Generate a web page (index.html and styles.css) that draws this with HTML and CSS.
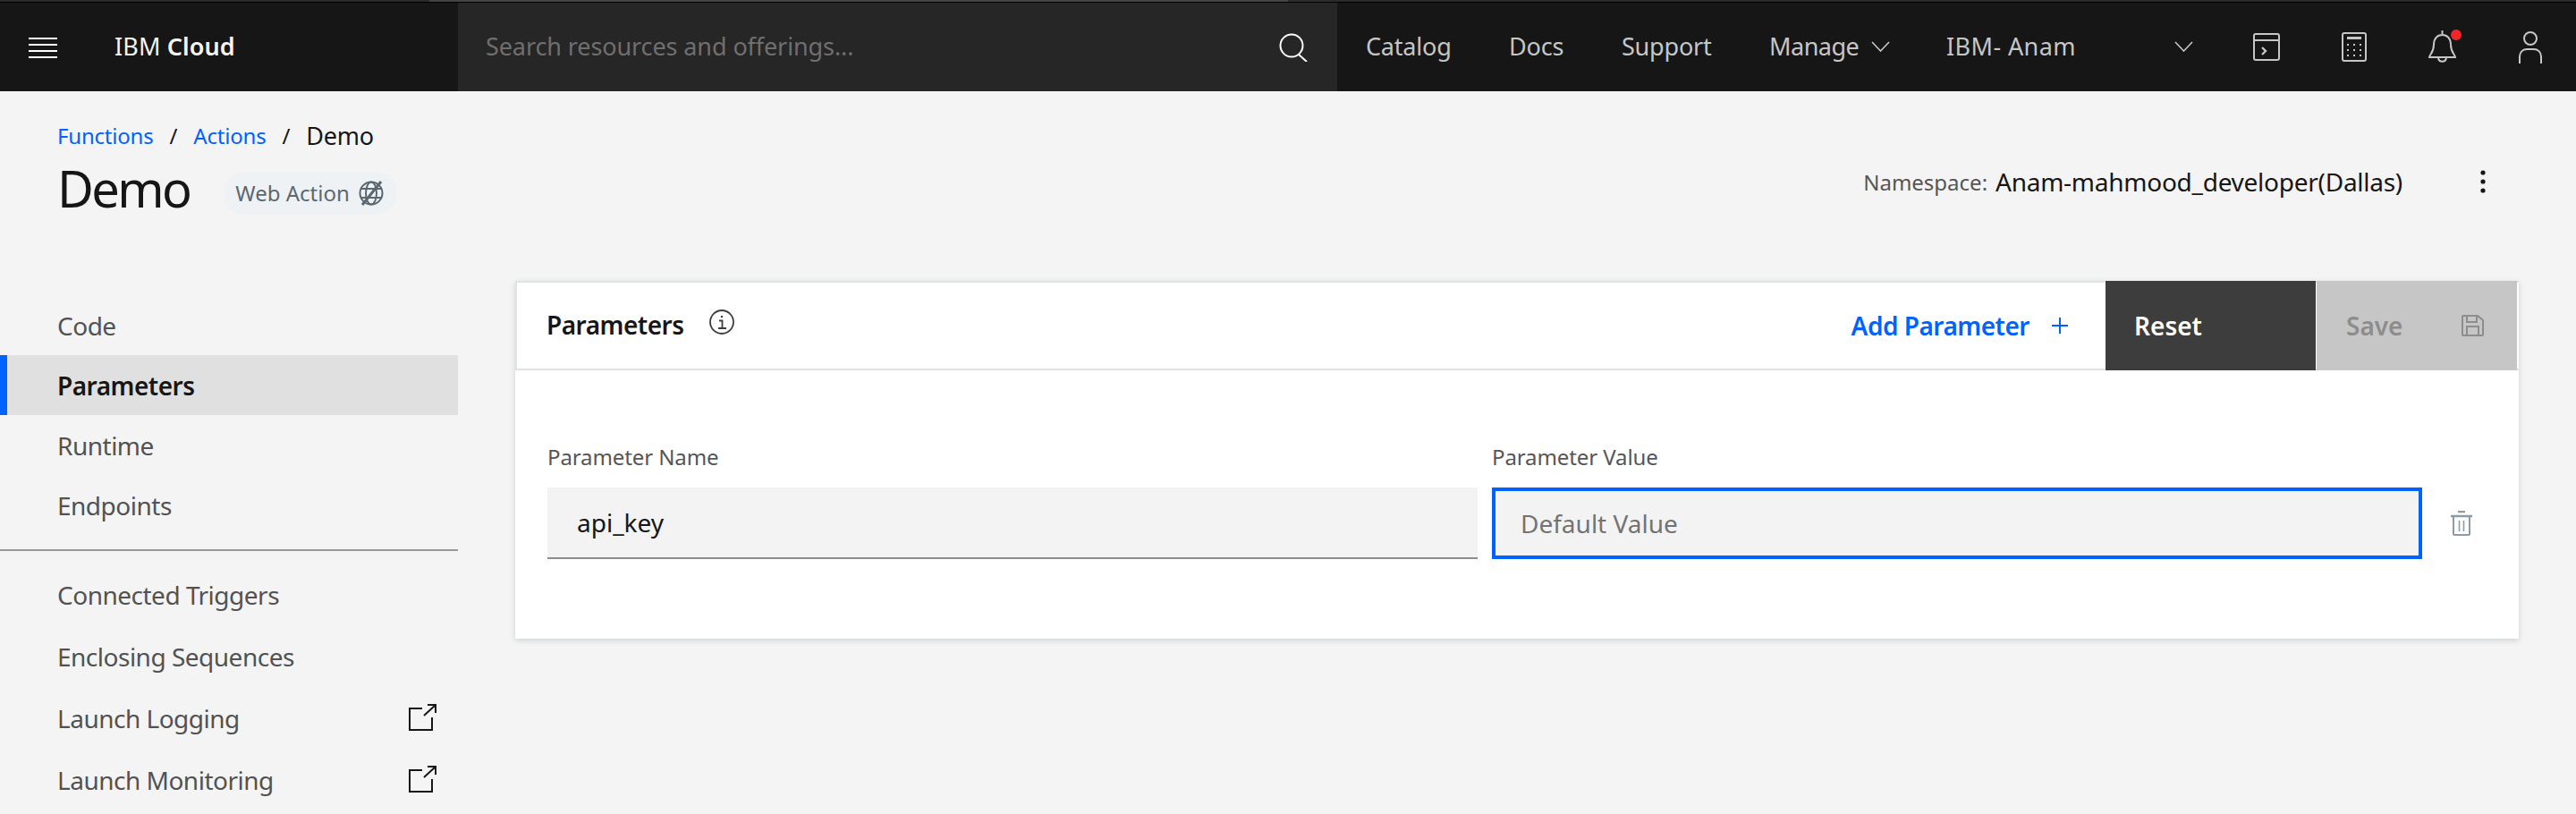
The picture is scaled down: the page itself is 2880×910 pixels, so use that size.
FILE: index.html
```html
<!DOCTYPE html>
<html lang="en">
<head>
    <meta charset="UTF-8">
    <title>Demo - Functions</title>
    <link rel="stylesheet" href="styles.css">
</head>
<body>
    <div class="strip"><span class="strip-a"></span><span class="strip-b"></span><span class="strip-c"></span></div>
    <header class="topbar">
        <div class="brand">
            <svg class="menu-icon" width="32" height="24" viewBox="0 0 32 24" fill="#fff"><rect y="1" width="32" height="2"/><rect y="8" width="32" height="2"/><rect y="15" width="32" height="2"/><rect y="22" width="32" height="2"/></svg>
            <span class="brand-name">IBM <b>Cloud</b></span>
        </div>
        <div class="search">
            <span class="search-text">Search resources and offerings...</span>
            <svg width="34" height="32" viewBox="0 0 34 32" fill="none" stroke="#fff" stroke-width="2"><circle cx="15" cy="14" r="12.5"/><path d="M23 24l9 8"/></svg>
        </div>
        <nav class="nav">
            <span>Catalog</span>
            <span>Docs</span>
            <span>Support</span>
            <span class="nav-manage">Manage
                <svg width="21" height="12" viewBox="0 0 21 12" fill="none" stroke="#c6c6c6" stroke-width="1.6"><path d="M1 1l9.500 10L20 1"/></svg>
            </span>
            <span class="nav-account">IBM- Anam
                <svg width="21" height="12" viewBox="0 0 21 12" fill="none" stroke="#c6c6c6" stroke-width="1.6"><path d="M1 1l9.500 10L20 1"/></svg>
            </span>
            <svg width="30" height="31" viewBox="0 0 30 31" fill="none" stroke="#c6c6c6" stroke-width="2"><rect x="1" y="1" width="28" height="29" rx="2"/><path d="M1 8h28"/><path d="M10 16l4 4-4 4" stroke-width="2.400"/></svg>
            <svg width="28" height="33" viewBox="0 0 28 33" fill="none" stroke="#c6c6c6" stroke-width="2"><rect x="1" y="1" width="26" height="31" rx="2"/><path d="M6 6.500h16" stroke-width="3"/><path d="M6 14h2M13 14h2M20 14h2M6 20h2M13 20h2M20 20h2M6 26h2M13 26h2M20 26h2"/></svg>
            <span class="bell">
                <svg width="34" height="37" viewBox="0 0 34 37" fill="none" stroke="#c6c6c6" stroke-width="2"><path d="M16.500 0v5M2 30h29c0-3-5-5-5-14 0-7-4-11-9.500-11S7 9 7 16c0 9-5 11-5 14z"/><path d="M12 31c1 5 8 5 9 0"/></svg>
                <span class="bell-dot"></span>
            </span>
            <svg width="26" height="36" viewBox="0 0 26 36" fill="none" stroke="#c6c6c6" stroke-width="2"><circle cx="13" cy="8" r="7"/><path d="M1 36V28c0-5 4-8 8-8h8c4 0 8 3 8 8v8"/></svg>
        </nav>
    </header>

    <section class="page-head">
        <div>
            <div class="breadcrumb"><a>Functions</a><i>/</i><a>Actions</a><i>/</i><span>Demo</span></div>
            <div class="title-row">
                <h1>Demo</h1>
                <span class="tag">Web Action
                    <svg width="28" height="28" viewBox="0 0 28 28" fill="none" stroke="#5a6872" stroke-width="2"><circle cx="14" cy="14" r="12.500"/><ellipse cx="14" cy="14" rx="6" ry="12.500"/><path d="M2 9h24M2 19h24"/><path d="M25 1L4 27" stroke-width="3"/></svg>
                </span>
            </div>
        </div>
        <div class="namespace">
            <span class="ns-label">Namespace:</span>
            <span class="ns-value">Anam-mahmood_developer(Dallas)</span>
            <svg class="kebab" width="6" height="26" viewBox="0 0 6 26" fill="#161616"><circle cx="3" cy="3" r="2.600"/><circle cx="3" cy="13" r="2.600"/><circle cx="3" cy="23" r="2.600"/></svg>
        </div>
    </section>

    <main class="layout">
        <aside class="sidebar">
            <ul class="side-group">
                <li>Code</li>
                <li class="active">Parameters</li>
                <li>Runtime</li>
                <li>Endpoints</li>
            </ul>
            <ul class="side-group side-lower">
                <li>Connected Triggers</li>
                <li>Enclosing Sequences</li>
                <li>Launch Logging
                    <svg width="31" height="30" viewBox="0 0 31 30" fill="none" stroke="#161616" stroke-width="2"><path d="M15 5H1v24h25V15"/><path d="M17 13L30 1M21 1h9v9"/></svg>
                </li>
                <li>Launch Monitoring
                    <svg width="31" height="30" viewBox="0 0 31 30" fill="none" stroke="#161616" stroke-width="2"><path d="M15 5H1v24h25V15"/><path d="M17 13L30 1M21 1h9v9"/></svg>
                </li>
            </ul>
        </aside>

        <section class="card">
            <div class="card-head">
                <h2>Parameters</h2>
                <svg class="info" width="28" height="28" viewBox="0 0 28 28" fill="none" stroke="#3d3d3d" stroke-width="1.800"><circle cx="14" cy="14" r="13"/><path d="M11 12.500h3.500V21M10 21h9"/><path d="M14 7v2" stroke-width="2.200"/></svg>
                <button class="add-btn">Add Parameter
                    <svg width="18" height="18" viewBox="0 0 18 18" fill="none" stroke="#0062ff" stroke-width="2"><path d="M9 0v18M0 9h18"/></svg>
                </button>
                <button class="reset-btn">Reset</button>
                <button class="save-btn">Save
                    <svg width="25" height="24" viewBox="0 0 25 24" fill="none" stroke="#8d8d8d" stroke-width="2"><path d="M1 2a1 1 0 0 1 1-1h16l6 5v16a1 1 0 0 1-1 1H2a1 1 0 0 1-1-1z"/><path d="M6 1v7h11V1M6 23V13h13v10"/></svg>
                </button>
            </div>
            <div class="card-body">
                <div class="field field-name">
                    <label>Parameter Name</label>
                    <input class="input" type="text" value="api_key">
                </div>
                <div class="field field-value">
                    <label>Parameter Value</label>
                    <input class="input input-focus" type="text" placeholder="Default Value">
                </div>
                <svg class="trash" width="24" height="28" viewBox="0 0 24 28" fill="none" stroke="#8c9ba5" stroke-width="2"><path d="M8 1h8" stroke-width="2.500"/><path d="M0 6h24" stroke-width="2.500"/><path d="M3 6v20a1 1 0 0 0 1 1h16a1 1 0 0 0 1-1V6"/><path d="M9.500 11v12M14.500 11v12" stroke-width="1.600"/></svg>
            </div>
        </section>
    </main>
</body>
</html>
```

FILE: styles.css
```css
* {
    box-sizing: border-box;
}
html, body {
    height: 910px;
    overflow: hidden;
}
body {
    margin: 0;
    background-color: #f4f4f4;
    color: #161616;
    font-family: "Noto Sans", Arial, sans-serif;
    font-size: 28px;
}
ul {
    list-style: none;
    margin: 0;
    padding: 0;
}
h1, h2 {
    margin: 0;
    font-weight: 400;
}

/* top bar */
.strip {
    display: flex;
    height: 3px;
    background-color: #000;
}
.strip span {
    height: 2px;
}
.strip-a {
    width: 480px;
    background-color: #2b2b2b;
}
.strip-b {
    width: 960px;
    background-color: #444;
}
.strip-c {
    flex: 1;
    background-color: #2b2b2b;
}
.topbar {
    display: flex;
    height: 99px;
    background-color: #161616;
    color: #c6c6c6;
}
.brand {
    display: flex;
    align-items: center;
    width: 512px;
    padding-left: 32px;
}
.menu-icon {
    margin-right: 64px;
}
.brand-name {
    color: #f4f4f4;
    font-size: 27px;
    letter-spacing: 0.1px;
    margin-bottom: 2px;
}
.brand-name b {
    font-weight: 600;
}
.search {
    display: flex;
    align-items: center;
    justify-content: space-between;
    width: 983px;
    padding: 0 32px 0 31px;
    background-color: #262626;
    color: #6f6f6f;
}
.search-text {
    font-size: 27px;
    letter-spacing: -0.1px;
    margin-bottom: 2px;
}
.nav {
    flex: 1;
    display: grid;
    grid-template-columns: 160px 126px 165px 198px 343px 99px 96px 102px 1fr;
    align-items: center;
    padding-left: 32px;
    font-size: 27px;
    letter-spacing: -0.2px;
}
.nav > span {
    padding-bottom: 2px;
}
.nav-manage, .nav-account {
    display: flex;
    align-items: center;
}
.nav-manage {
    letter-spacing: -0.5px;
}
.nav-manage svg {
    margin-left: 14px;
}
.nav-account {
    justify-content: space-between;
    padding-right: 67px;
    letter-spacing: 0.4px;
}
.bell {
    position: relative;
    display: block;
    height: 37px;
}
.bell-dot {
    position: absolute;
    top: -1px;
    left: 26px;
    width: 12px;
    height: 12px;
    border-radius: 50%;
    background-color: #f0262a;
}

/* page heading */
.page-head {
    display: flex;
    justify-content: space-between;
    height: 212px;
    padding: 34px 101px 0 64px;
}
.breadcrumb {
    display: flex;
    align-items: center;
    height: 30px;
    font-size: 24px;
    letter-spacing: -0.2px;
}
.breadcrumb a {
    color: #0062ff;
}
.breadcrumb i {
    margin: 0 18px;
    font-style: normal;
}
.breadcrumb span {
    font-size: 27px;
}
.title-row {
    display: flex;
    align-items: center;
    margin-top: 9px;
}
h1 {
    font-size: 56px;
    line-height: 70px;
    letter-spacing: -2.6px;
}
.tag {
    display: flex;
    align-items: center;
    gap: 10px;
    height: 48px;
    margin-left: 37px;
    margin-top: 11px;
    padding: 0 15px 0 14px;
    border-radius: 24px;
    background-color: #eff2f5;
    color: #5a6872;
    font-size: 24px;
}
.namespace {
    display: flex;
    align-items: center;
    height: 40px;
    margin-top: 47px;
}
.ns-label {
    color: #565656;
    font-size: 24px;
    margin-right: 9px;
}
.ns-value {
    font-size: 28px;
    letter-spacing: -0.26px;
}
.kebab {
    margin-left: 87px;
}

/* side menu */
.layout {
    display: flex;
}
.sidebar {
    width: 512px;
    margin-top: 16px;
    margin-right: 64px;
    color: #525252;
    letter-spacing: -0.5px;
}
.side-group li {
    display: flex;
    align-items: center;
    justify-content: space-between;
    height: 67px;
    padding: 0 24px 0 64px;
}
.side-group .active {
    padding-left: 56px;
    border-left: 8px solid #0062ff;
    background-color: #e0e0e0;
    color: #161616;
    font-weight: 600;
}
.side-group li svg {
    margin-top: -2px;
}
.side-lower {
    margin-top: 16px;
    padding-top: 14px;
    border-top: 2px solid #999;
}
.side-lower li {
    height: 69px;
}

/* parameters card */
.card {
    width: 2240px;
    height: 400px;
    background-color: #fff;
    box-shadow: 0 2px 6px rgba(90, 104, 114, 0.25);
}
.card-head {
    display: flex;
    align-items: center;
    height: 100px;
    padding: 0 2px 0 33px;
    border: 2px solid #dfe3e6;
    border-right: none;
}
h2 {
    font-size: 28px;
    font-weight: 600;
    letter-spacing: -0.5px;
    margin-bottom: 2px;
}
.info {
    margin: -8px 0 0 28px;
}
.card-head button {
    display: flex;
    align-items: center;
    justify-content: space-between;
    padding: 0;
    border: none;
    font: inherit;
    font-weight: 600;
}
.add-btn {
    margin-left: auto;
    margin-right: 42px;
    gap: 25px;
    background: none;
    color: #0062ff;
    letter-spacing: -0.5px;
}
.reset-btn, .save-btn {
    height: 100px;
    margin-top: -2px;
    margin-bottom: -2px;
}
.card-head .reset-btn {
    width: 235px;
    padding: 0 32px;
    background-color: #3d3d3d;
    color: #fff;
}
.card-head .save-btn {
    width: 224px;
    margin-left: 1px;
    padding: 0 37px 0 33px;
    background-color: #c6c6c6;
    color: #8d8d8d;
}
.card-body {
    display: flex;
    align-items: flex-end;
    padding: 0 52px 89px 36px;
    height: 300px;
}
.field label {
    display: block;
    margin-bottom: 16px;
    color: #565656;
    font-size: 24px;
    line-height: 36px;
    letter-spacing: -0.1px;
}
.field-name {
    width: 1040px;
    margin-right: 16px;
}
.field-value {
    width: 1040px;
    margin-right: 32px;
}
.input {
    display: block;
    width: 100%;
    height: 80px;
    padding: 0 33px;
    border: none;
    border-bottom: 2px solid #8d8d8d;
    border-radius: 0;
    outline: none;
    background-color: #f3f3f3;
    color: #161616;
    font: inherit;
}
.input-focus {
    padding-left: 28px;
    border: 4px solid #0062ff;
}
.input-focus::placeholder {
    color: #737373;
    opacity: 1;
}
.trash {
    margin-bottom: 26px;
}
```
